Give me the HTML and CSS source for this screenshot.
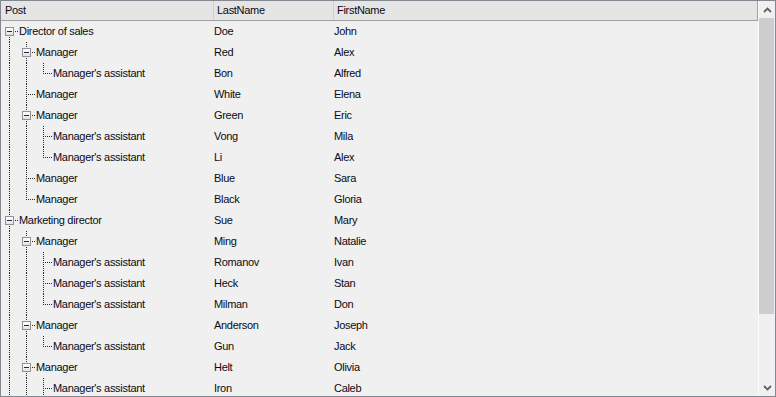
FILE: index.html
```html
<!DOCTYPE html>
<html lang="en">
<head>
    <meta charset="UTF-8">
    <title>Staff tree</title>
    <link rel="stylesheet" href="styles.css">
</head>
<body>
    <div class="treelist">
        <div class="main">
            <div class="header">
                <div class="hcell">Post</div>
                <div class="hcell">LastName</div>
                <div class="hcell">FirstName</div>
            </div>
            <div class="rows">
                <div class="row"><div class="post"><span class="g first"><i class="box"></i></span><span class="label">Director of sales</span></div><div class="cell">Doe</div><div class="cell">John</div></div>
                <div class="row"><div class="post"><span class="g v"></span><span class="g tee"><i class="box"></i></span><span class="label">Manager</span></div><div class="cell">Red</div><div class="cell">Alex</div></div>
                <div class="row"><div class="post"><span class="g v"></span><span class="g v"></span><span class="g elbow"></span><span class="label">Manager's assistant</span></div><div class="cell">Bon</div><div class="cell">Alfred</div></div>
                <div class="row"><div class="post"><span class="g v"></span><span class="g tee"></span><span class="label">Manager</span></div><div class="cell">White</div><div class="cell">Elena</div></div>
                <div class="row"><div class="post"><span class="g v"></span><span class="g tee"><i class="box"></i></span><span class="label">Manager</span></div><div class="cell">Green</div><div class="cell">Eric</div></div>
                <div class="row"><div class="post"><span class="g v"></span><span class="g v"></span><span class="g tee"></span><span class="label">Manager's assistant</span></div><div class="cell">Vong</div><div class="cell">Mila</div></div>
                <div class="row"><div class="post"><span class="g v"></span><span class="g v"></span><span class="g elbow"></span><span class="label">Manager's assistant</span></div><div class="cell">Li</div><div class="cell">Alex</div></div>
                <div class="row"><div class="post"><span class="g v"></span><span class="g tee"></span><span class="label">Manager</span></div><div class="cell">Blue</div><div class="cell">Sara</div></div>
                <div class="row"><div class="post"><span class="g v"></span><span class="g elbow"></span><span class="label">Manager</span></div><div class="cell">Black</div><div class="cell">Gloria</div></div>
                <div class="row"><div class="post"><span class="g tee"><i class="box"></i></span><span class="label">Marketing director</span></div><div class="cell">Sue</div><div class="cell">Mary</div></div>
                <div class="row"><div class="post"><span class="g v"></span><span class="g tee"><i class="box"></i></span><span class="label">Manager</span></div><div class="cell">Ming</div><div class="cell">Natalie</div></div>
                <div class="row"><div class="post"><span class="g v"></span><span class="g v"></span><span class="g tee"></span><span class="label">Manager's assistant</span></div><div class="cell">Romanov</div><div class="cell">Ivan</div></div>
                <div class="row"><div class="post"><span class="g v"></span><span class="g v"></span><span class="g tee"></span><span class="label">Manager's assistant</span></div><div class="cell">Heck</div><div class="cell">Stan</div></div>
                <div class="row"><div class="post"><span class="g v"></span><span class="g v"></span><span class="g elbow"></span><span class="label">Manager's assistant</span></div><div class="cell">Milman</div><div class="cell">Don</div></div>
                <div class="row"><div class="post"><span class="g v"></span><span class="g tee"><i class="box"></i></span><span class="label">Manager</span></div><div class="cell">Anderson</div><div class="cell">Joseph</div></div>
                <div class="row"><div class="post"><span class="g v"></span><span class="g v"></span><span class="g elbow"></span><span class="label">Manager's assistant</span></div><div class="cell">Gun</div><div class="cell">Jack</div></div>
                <div class="row"><div class="post"><span class="g v"></span><span class="g tee"><i class="box"></i></span><span class="label">Manager</span></div><div class="cell">Helt</div><div class="cell">Olivia</div></div>
                <div class="row"><div class="post"><span class="g v"></span><span class="g v"></span><span class="g tee"></span><span class="label">Manager's assistant</span></div><div class="cell">Iron</div><div class="cell">Caleb</div></div>
            </div>
        </div>
        <div class="scrollbar">
            <div class="arrow">
                <svg width="9" height="6" viewBox="0 0 9 6"><path d="M1 5 L4.5 1.5 L8 5" fill="none" stroke="#606060" stroke-width="1.8"/></svg>
            </div>
            <div class="track"><div class="thumb"></div></div>
            <div class="arrow">
                <svg width="9" height="6" viewBox="0 0 9 6"><path d="M1 1 L4.5 4.5 L8 1" fill="none" stroke="#606060" stroke-width="1.8"/></svg>
            </div>
        </div>
    </div>
</body>
</html>
```

FILE: styles.css
```css
* { margin: 0; padding: 0; box-sizing: border-box; }
body { font-family: "Liberation Sans", Arial, sans-serif; font-size: 11px; letter-spacing: -0.3px; color: #0a0a14; background-color: #f0f0f0; }
.treelist { width: 776px; height: 397px; border: 1px solid #828790; display: flex; background-color: #f0f0f0; overflow: hidden; }
.main { width: 757px; flex: none; overflow: hidden; }
.header { display: grid; grid-template-columns: 213px 120px 1fr; height: 20px; background-color: #e5e5e5; border-bottom: 1px solid #a0a0a0; border-right: 1px solid #a0a0a0; }
.hcell { line-height: 19px; padding-left: 3px; border-right: 1px solid #cfcfcf; white-space: nowrap; }
.hcell:first-child { padding-left: 4px; }
.hcell:last-child { border-right: none; }
.row { display: grid; grid-template-columns: 213px 120px 1fr; height: 21px; line-height: 21px; }
.post { display: flex; white-space: nowrap; }
.label { padding-left: 1px; }
.cell { white-space: nowrap; }
.g { position: relative; width: 17px; height: 21px; flex: none; }
.g.v::before, .tee::before, .elbow::before, .first::before { content: ""; position: absolute; left: 8px; top: 0; height: 21px; border-left: 1px dotted #2c2c2c; }
.elbow::before { height: 11px; }
.first::before { top: 10px; height: 11px; }
.tee::after, .elbow::after, .first::after { content: ""; position: absolute; left: 10px; top: 10px; width: 7px; border-top: 1px dotted #2c2c2c; }
.box { position: absolute; left: 4px; top: 6px; width: 9px; height: 9px; border: 1px solid #929292; background: linear-gradient(#ffffff, #e2e2e2); z-index: 1; }
.box::before { content: ""; position: absolute; left: 1px; top: 3px; width: 5px; height: 1px; background-color: #1e2a55; }
.scrollbar { width: 17px; flex: none; display: flex; flex-direction: column; border-left: 1px solid #fbfbfb; }
.arrow { height: 17px; display: flex; align-items: center; justify-content: center; flex: none; }
.track { flex: 1; }
.thumb { height: 296px; margin-right: 1px; background-color: #cdcdcd; }
```
